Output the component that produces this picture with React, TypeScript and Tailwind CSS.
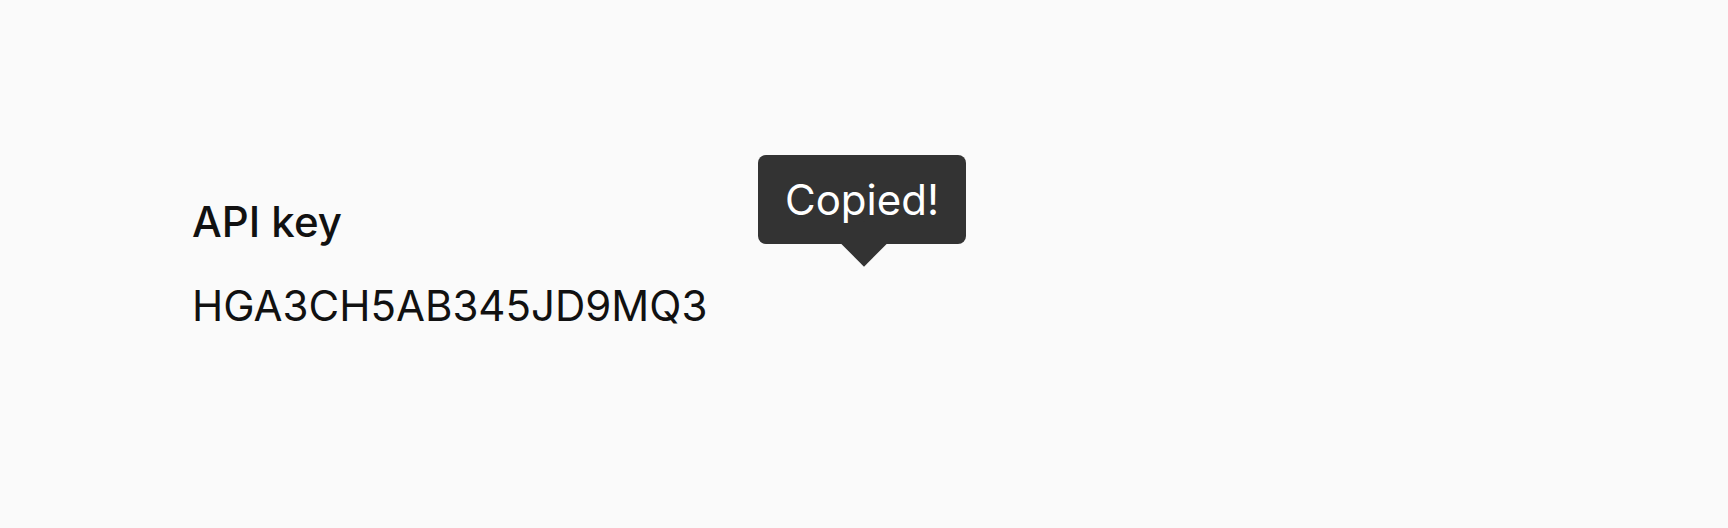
import React from 'react';

const API_KEY = 'HGA3CH5AB345JD9MQ3';

function CopiedTooltip() {
  return (
    <div className="absolute left-[566px] top-[-43px]">
      <div className="relative rounded-lg bg-[#333333] px-[27px] py-[20px] text-[42px] leading-[49px] text-white">
        Copied!
        <span className="absolute left-[90px] bottom-[-16px] h-8 w-8 rotate-45 bg-[#333333]" />
      </div>
    </div>
  );
}

export default function App() {
  return (
    <div
      className="min-h-screen w-full bg-[#fafafa] text-[#111111]"
      style={{ fontFamily: 'Inter, "Noto Sans", sans-serif' }}
    >
      <div className="pl-[192px] pt-[198px]">
        <div className="relative">
          <h2 className="text-[42px] leading-[48px] font-medium">API key</h2>
          <p className="mt-[36px] text-[42px] leading-[48px]">{API_KEY}</p>
          <CopiedTooltip />
        </div>
      </div>
    </div>
  );
}
